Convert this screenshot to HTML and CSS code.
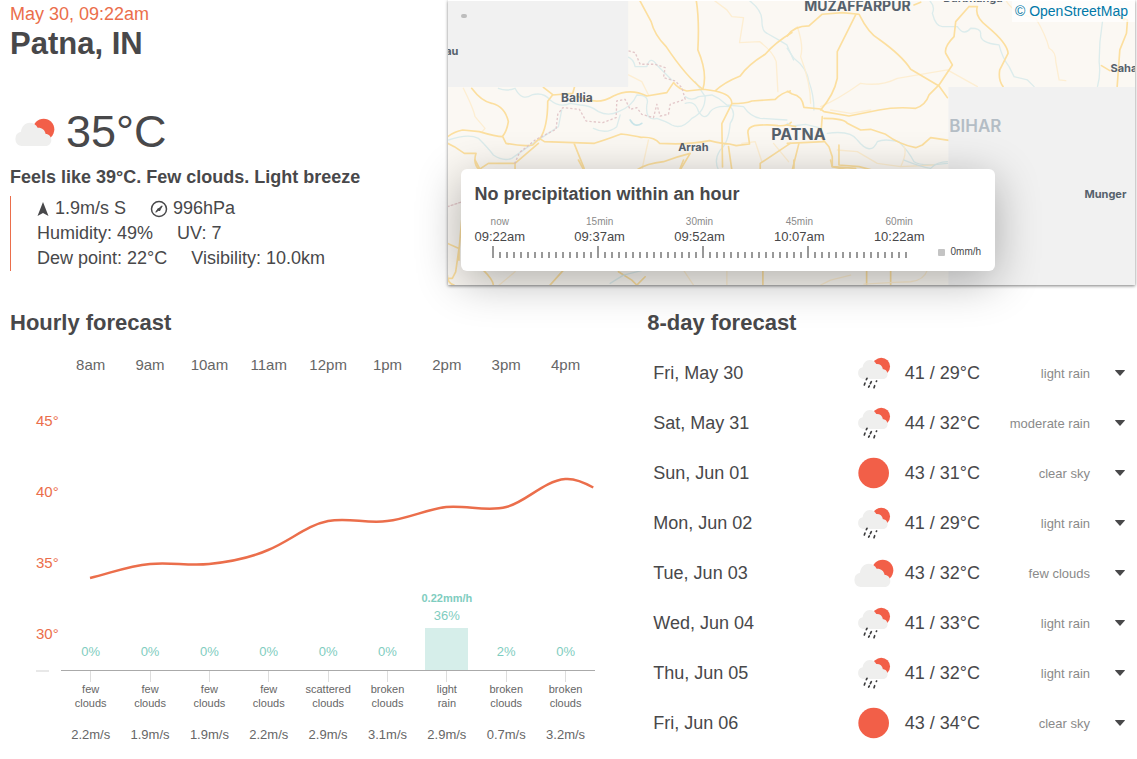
FILE: index.html
```html
<!DOCTYPE html>
<html lang="en">
<head>
<meta charset="utf-8">
<title>Weather in Patna, IN</title>
<meta name="viewport" content="width=device-width, initial-scale=1">
<link rel="stylesheet" href="styles.css">
</head>
<body>
<svg class="sprite" aria-hidden="true">
  <symbol id="cloud" viewBox="0 0 150 150">
    <circle cx="101" cy="67" r="32" fill="#f25f48"/>
    <path fill="#efefee" d="M34 117a22 22 0 0 1-1-43c1-14 12-27 26-27 11 0 20 6 24 15 12-1 22 6 24 19 10 0 17 8 17 18s-7 18-17 18z"/>
  </symbol>
  <symbol id="rain" viewBox="0 0 150 150">
    <g transform="translate(14 -1) scale(.82)">
      <circle cx="101" cy="69" r="32" fill="#f25f48"/>
      <path fill="#efefee" d="M34 115a22 22 0 0 1-1-43c1-14 12-27 26-27 11 0 20 6 24 15 12-1 22 6 24 19 10 0 17 8 17 18s-7 18-17 18z"/>
    </g>
    <path stroke="#3c3c3e" stroke-width="5" stroke-linecap="round" fill="none" d="M54 91l-2 4M48 105l-2 6M67 101l-3 6M61 114l-2 3M83 99l-1 1M77 113l-2 6"/>
  </symbol>
  <symbol id="sun" viewBox="0 0 150 150">
    <circle cx="74" cy="75" r="46" fill="#f25f48"/>
  </symbol>
  <symbol id="caret" viewBox="0 0 10 6">
    <path d="M.5 0h9q.8 0 .2.8L5.500 5.600q-.5.500-1 0L.3.8Q-.3 0 .5 0z" fill="#48484a"/>
  </symbol>
</svg>

<main class="page">
  <section class="top">
    <div class="current">
      <p class="date">May 30, 09:22am</p>
      <h1 class="city">Patna, IN</h1>
      <div class="temp">
        <svg class="icon"><use href="#cloud"/></svg>
        <span>35°C</span>
      </div>
      <p class="feels">Feels like 39°C. Few clouds. Light breeze</p>
      <ul class="facts">
        <li>
          <span><svg class="arrow" viewBox="0 0 12 14"><path d="M6 0l5.500 14-5.500-3-5.500 3z" fill="#48484a"/></svg>1.9m/s S</span>
          <span><svg class="gauge" viewBox="0 0 18 18"><circle cx="9" cy="9" r="7.500" fill="none" stroke="#48484a" stroke-width="1.500"/><path d="M13 5l-3 6-2 0zM5 13l3-5 2 1z" fill="#48484a"/><path d="M6 12l6-6" stroke="#48484a" stroke-width="1.500"/></svg>996hPa</span>
        </li>
        <li>
          <span><span class="key">Humidity:</span>49%</span>
          <span><span class="key">UV:</span>7</span>
        </li>
        <li>
          <span><span class="key">Dew point:</span>22°C</span>
          <span><span class="key">Visibility:</span>10.0km</span>
        </li>
      </ul>
    </div>

    <div class="map">
      <svg class="tiles" viewBox="448 1 687 284" preserveAspectRatio="xMidYMid slice" role="img" aria-label="Map around Patna">
        <rect x="448" y="0" width="688" height="286" fill="#fbf8f3"/>
        <g fill="none" stroke-linejoin="round" stroke-linecap="round">
          <g transform="translate(440 0) scale(.33333)">
            <g stroke="#dcecec" stroke-width="4">
              <path d="M925 0q40 30 40 60q0 35 15 40l35 20 25 15 20 45M175 265q25 10 50 0 20 40 50 20 35-10 55 15 30 25 60 10l30 5q30 0 55 20 30 15 60 0 40-15 55-50 40 0 30 30-5 50 30 40 30 10 45 20 30 15 60-20 40-20 40-65l-30-45M560 170q20 5 25 30l35 0q10-35 30-5l45 45M460 385q40 20 70-5l10-35M25 420q60-20 90-5 30 30 45 50 30 20 55 10l50-35 90-60 10-50M735 290q20 15 40 0l40-5 20 10 25 20 50 5q20 30 50 35l80 5M735 310q30-10 40 25 20 30 35 0 15-20 60-15 20 20 0 50-5 60-30 80-20 30-5 60"/>
            </g>
            <path d="M570 360q15 25 35 10" stroke="#c9e4e8" stroke-width="5"/>
            <g stroke="#fdeed2" stroke-width="4">
              <path d="M820 0l40 30 15 20 35 3-12 75 60-3q40 30 50 60l5 90M70 265q30 60 35 85l30 35-10 12M565 225l40 20 20 40M905 430l40-5 20 60M1000 430l45 55M625 420l-20 90"/>
            </g>
            <g stroke="#fcdf9f" stroke-width="5">
              <path d="M598 0l35 65q10 40 45 75 60 90 110 128M768 0q10 60 5 150 30 70 15 118M1055 98q-50 30-80 65-50 30-75 65-50 20-75 45l-35-5-50 5q-25-5-40-25l-20 30-60 10q-50-25-100 0-40 25-80 10-20-5-30-10M825 273q50 10 50 38 40 0 60-8l70-5q20-20 45-25M310 262l28 22-15 20q0 80-25 115M338 285l60-5 5-18M95 265q30 40 60 45 40 10 50 55-5 30-18 45M23 410q20-15 45-20l50 5q50 15 70 15l10 20q50 10 80 5l20-20 15 10 150 5q60-20 80-28 40 5 60 10 40-2 55 18 90 5 150-8 40 10 60 10l20 5 40-5-5-35q0-15 20-20 40-5 70 0 30 2 40-10M23 430l20 10 30 20 35 0q-10 30 10 50M295 430l-70 60-80 0-30 20M225 490l0 25M402 430l30 75M590 510q30-20 80-25 40-15 80-25l-30 50M875 311q-20 40-30 60l2 130M1050 430l-90 60 0 25M865 440l10 70"/>
            </g>
            <path d="M565 153l20 5 15 35 45 0 30 10-5 30 35 10 20 20 10 35-45 15-5 30-25 5-10-35-10 40-35-10-15-20-20 5-15-30-25 5-2 50-40 15-50-5-20-35-50-5-15 20-5 45-60 30-50 40-15 35" stroke="#e3c8ca" stroke-width="4" stroke-linecap="butt" stroke-dasharray="7 6"/>
          </g>
          <g transform="translate(787 0) scale(.33333)">
            <g stroke="#dcecec" stroke-width="4">
              <path d="M425 0q20 20 10 40 10 40 30 40l45 0q20 30 40 5 30 0 30 15-5 30 55 35 10 40 30 65l15 30 40 10 20 20M945 65q-10 60-10 120 5 40-5 75M0 145l20 30q40 30 45 70 15 40 15 85M120 400q70-10 90 20 40 50 60 5 20-10 65 0 30 30 45 60 20 15 100 5M0 370l15 8 40-5 40 10"/>
            </g>
            <g stroke="#fdeed2" stroke-width="4">
              <path d="M30 80q20 60 10 90 30 80 30 140M100 320q50-20 120-70 60 10 110-15l150-25 90 50M655 0q20 40 90 55 30 50 40 90 20 10 20 40l10 55 20 2M350 440q10 20-10 60M130 330l60 10 60-10M150 450l60 5 60 35 70 10 100-5"/>
            </g>
            <g stroke="#fcdf9f" stroke-width="5">
              <path d="M0 108q20-30 65-30l40-35 60-5 50 5q30 60 60 75 70 50 95 90l85 50 25 35M205 45l-25 50-30 60 0 80q-10 50-50 95M545 20l-40 45-5 45q-30 30-25 50l20 35-40 60-30 30q-10 30-40 40-60-5-110 5l-90 18-75-13-10-8-50-5q-5-35-35-40l-15-8M545 20l25 0q-10 30 30 60 60 50 62 80l-25 50q-5 30 10 50M110 355q60 0 70 15l40 20 30-2 45 15q40 30 90 40l20-8 25-22 55 8M1010 60l-25-15 35 15-3 40-20 50-8 110M942 197l25 15M105 350l-5 60 25 30 10 30 0 30 70 15M15 510l20-80M155 435l0 60 60 5 40 10M380 15l20-8M0 430l110-5M0 375l25 5"/>
            </g>
          </g>
          <g transform="translate(440 160) scale(.33333)" stroke="#fcdf9f" stroke-width="5">
            <path d="M22 250l35 15-10 70-10 20-15 0M65 180l-8 90 0 30M130 330q30 30 30 45M330 375l40-45M535 335l40 25 15 15 25-25M968 330v48M22 345q0 25 20 30M105 0l15 28M415 0l15 28M730 0l-10 25"/>
            <path d="M225 335l-50 42M730 330l30 45M860 330v48" stroke="#fdeed2" stroke-width="4"/>
            <path d="M510 370l40-25 60-15" stroke="#dcecec" stroke-width="4"/>
            <path d="M22 140l45-15" stroke="#e3c8ca" stroke-width="4" stroke-dasharray="6 6"/>
          </g>
          <g transform="translate(787 160) scale(.33333)" stroke="#fcdf9f" stroke-width="5">
            <path d="M238 330v48M310 330v48M20 0l0 25M130 0l5 20 70 5"/>
            <path d="M190 345l-60 15-30 15M420 330q-10 30-50 35l-50 2-90 5" stroke="#fdeed2" stroke-width="4"/>
            <path d="M350 0q50 20 80 25 20-20 50-20" stroke="#dcecec" stroke-width="4"/>
          </g>
        </g>
        <rect x="448" y="0" width="180" height="87" fill="#f1f1f1"/>
        <rect x="948" y="87" width="188" height="199" fill="#f1f1f1"/>
        <rect x="461" y="14" width="6" height="4" rx="2" fill="#bdbdbd"/>
        <g class="places">
          <text x="804" y="11" font-size="14">MUZAFFARPUR</text>
          <text x="943" y="2" font-size="11">Darbhanga</text>
          <text x="771" y="140" font-size="16">PATNA</text>
          <text x="561" y="102" font-size="12">Ballia</text>
          <text x="678" y="151" font-size="11">Arrah</text>
          <text x="1084" y="198" font-size="11">Munger</text>
          <text x="1110" y="72" font-size="11">Saharsa</text>
          <text x="435" y="55" font-size="11">Mau</text>
          <text x="949" y="132" font-size="17" class="region">BIHAR</text>
        </g>
      </svg>
      <a class="credit" href="#">© OpenStreetMap</a>
      <div class="rainfall">
        <h2 class="rainfall-title">No precipitation within an hour</h2>
        <div class="rainfall-body">
          <div class="timeline">
            <ol class="times">
              <li><small>now</small>09:22am</li>
              <li><small>15min</small>09:37am</li>
              <li><small>30min</small>09:52am</li>
              <li><small>45min</small>10:07am</li>
              <li><small>60min</small>10:22am</li>
            </ol>
            <svg class="ticks" viewBox="0 0 415 12" aria-hidden="true"><path d="M0 9h415" stroke="#999" stroke-width="6" stroke-dasharray="2 5"/><path d="M0 6h415" stroke="#999" stroke-width="12" stroke-dasharray="2 103"/></svg>
          </div>
          <span class="legend">0mm/h</span>
        </div>
      </div>
    </div>
  </section>

  <section class="forecasts">
    <div class="hourly">
      <h2 class="heading">Hourly forecast</h2>
      <div class="chart">
        <ol class="columns hours">
          <li>8am</li><li>9am</li><li>10am</li><li>11am</li><li>12pm</li><li>1pm</li><li>2pm</li><li>3pm</li><li>4pm</li>
        </ol>
        <div class="scale"><span>45°</span><span>40°</span><span>35°</span><span>30°</span></div>
        <svg class="curve" viewBox="61 375 534 295" preserveAspectRatio="none" aria-hidden="true">
          <path d="M90 578C111 573 128 566 150 564C170 562 188 566 209 564C229 562 250 558 268 550C290 541 307 525 328 521C348 517 367 524 387 521C407 519 427 509 446 507C466 505 487 512 506 507C526 502 543 481 565 479C575 478 585 483 593 487.500" fill="none" stroke="#eb6e4b" stroke-width="2.500"/>
        </svg>
        <ol class="columns chance">
          <li>0%</li><li>0%</li><li>0%</li><li>0%</li><li>0%</li><li>0%</li>
          <li><b>0.22mm/h</b>36%<i class="bar" style="height:42px"></i></li>
          <li>2%</li><li>0%</li>
        </ol>
        <ol class="columns sky">
          <li>few clouds</li><li>few clouds</li><li>few clouds</li><li>few clouds</li><li>scattered clouds</li><li>broken clouds</li><li>light<br>rain</li><li>broken clouds</li><li>broken clouds</li>
        </ol>
        <ol class="columns wind">
          <li>2.2m/s</li><li>1.9m/s</li><li>1.9m/s</li><li>2.2m/s</li><li>2.9m/s</li><li>3.1m/s</li><li>2.9m/s</li><li>0.7m/s</li><li>3.2m/s</li>
        </ol>
      </div>
    </div>

    <div class="daily">
      <h2 class="heading">8-day forecast</h2>
      <ul class="days">
        <li><span class="day">Fri, May 30</span><svg class="icon"><use href="#rain"/></svg><span class="range">41 / 29°C</span><span class="desc">light rain</span><button class="more" aria-label="More about Fri, May 30"><svg class="caret"><use href="#caret"/></svg></button></li>
        <li><span class="day">Sat, May 31</span><svg class="icon"><use href="#rain"/></svg><span class="range">44 / 32°C</span><span class="desc">moderate rain</span><button class="more" aria-label="More about Sat, May 31"><svg class="caret"><use href="#caret"/></svg></button></li>
        <li><span class="day">Sun, Jun 01</span><svg class="icon"><use href="#sun"/></svg><span class="range">43 / 31°C</span><span class="desc">clear sky</span><button class="more" aria-label="More about Sun, Jun 01"><svg class="caret"><use href="#caret"/></svg></button></li>
        <li><span class="day">Mon, Jun 02</span><svg class="icon"><use href="#rain"/></svg><span class="range">41 / 29°C</span><span class="desc">light rain</span><button class="more" aria-label="More about Mon, Jun 02"><svg class="caret"><use href="#caret"/></svg></button></li>
        <li><span class="day">Tue, Jun 03</span><svg class="icon"><use href="#cloud"/></svg><span class="range">43 / 32°C</span><span class="desc">few clouds</span><button class="more" aria-label="More about Tue, Jun 03"><svg class="caret"><use href="#caret"/></svg></button></li>
        <li><span class="day">Wed, Jun 04</span><svg class="icon"><use href="#rain"/></svg><span class="range">41 / 33°C</span><span class="desc">light rain</span><button class="more" aria-label="More about Wed, Jun 04"><svg class="caret"><use href="#caret"/></svg></button></li>
        <li><span class="day">Thu, Jun 05</span><svg class="icon"><use href="#rain"/></svg><span class="range">41 / 32°C</span><span class="desc">light rain</span><button class="more" aria-label="More about Thu, Jun 05"><svg class="caret"><use href="#caret"/></svg></button></li>
        <li><span class="day">Fri, Jun 06</span><svg class="icon"><use href="#sun"/></svg><span class="range">43 / 34°C</span><span class="desc">clear sky</span><button class="more" aria-label="More about Fri, Jun 06"><svg class="caret"><use href="#caret"/></svg></button></li>
      </ul>
    </div>
  </section>
</main>
</body>
</html>
```
FILE: styles.css
```css
* {
  box-sizing: border-box;
}

body {
  margin: 0;
  background: #fff;
  color: #48484a;
  font: 18px/25px "Liberation Sans", Arial, sans-serif;
}

h1, h2, p, ul, ol {
  margin: 0;
  padding: 0;
  list-style: none;
}

svg {
  display: block;
}

.sprite {
  display: none;
}

.page {
  padding: 0 2px 0 10px;
}

.icon {
  flex: none;
  width: 50px;
  height: 50px;
}

/* Current conditions and map */
.top {
  display: grid;
  grid-template-columns: 7fr 11fr;
}

.current {
  padding-top: 2px;
}

.date {
  color: #eb6e4b;
  line-height: 24px;
}

.city {
  font-size: 31px;
  line-height: 36px;
}

.temp {
  display: flex;
  align-items: center;
  gap: 6px;
  margin-top: 45px;
  font-size: 45px;
  line-height: 50px;
}

.feels {
  margin-top: 8px;
  line-height: 24px;
  font-weight: bold;
}

.facts {
  margin-top: 7px;
  padding-left: 26px;
  border-left: 1px solid #eb6e4b;
}

.facts li {
  display: flex;
  gap: 24px;
}

.facts li > span {
  display: flex;
  align-items: center;
}

.key {
  margin-right: 5px;
}

.arrow {
  width: 12px;
  height: 14px;
  margin-right: 6px;
}

.gauge {
  width: 18px;
  height: 18px;
  margin-right: 5px;
}

.map {
  position: relative;
  height: 285px;
  padding-top: 1px;
  box-shadow: 0 1px 3px rgba(0, 0, 0, 0.5);
}

.tiles {
  width: 100%;
  height: 100%;
}

.places {
  fill: #56616c;
  font-family: Inter, "Open Sans", sans-serif;
  font-weight: 700;
}

.places .region {
  fill: #b4bdc5;
  font-weight: 600;
}

.credit {
  position: absolute;
  top: 1px;
  right: 0;
  padding: 0 7px 0 3px;
  background: rgba(255, 255, 255, 0.7);
  color: #0078a8;
  font-size: 14px;
  line-height: 21px;
  text-decoration: none;
}

.rainfall {
  position: absolute;
  left: 13px;
  bottom: 14px;
  padding: 14px 14px 12px;
  border-radius: 6px;
  background: #fff;
  box-shadow: 0 10px 45px rgba(0, 0, 0, 0.3);
}

.rainfall-title {
  font-size: 18px;
  line-height: 22px;
}

.rainfall-body {
  display: flex;
  align-items: flex-end;
  gap: 13px;
  margin-top: 10px;
}

.timeline {
  width: 450px;
}

.times {
  display: flex;
  justify-content: space-between;
  font-size: 13px;
  line-height: 16px;
  text-align: center;
}

.times small {
  display: block;
  color: #8a8a8a;
  font-size: 10px;
  line-height: 14px;
}

.ticks {
  width: 415px;
  height: 12px;
  margin: 1px 0 1px 17px;
}

.legend {
  display: flex;
  align-items: center;
  gap: 6px;
  font-size: 10px;
  line-height: 14px;
}

.legend::before {
  content: "";
  width: 7px;
  height: 7px;
  border-radius: 1px;
  background: #c4c4c4;
}

/* Forecasts */
.forecasts {
  display: grid;
  grid-template-columns: 6fr 5fr;
  column-gap: 52px;
  margin-top: 23px;
}

.heading {
  font-size: 22px;
  line-height: 30px;
}

.chart {
  display: grid;
  grid-template-columns: 51px 1fr;
  grid-template-rows: auto 296px auto auto;
  margin-top: 17px;
  color: #666;
}

.columns {
  grid-column: 2;
  display: grid;
  grid-template-columns: repeat(9, 1fr);
  text-align: center;
}

.hours {
  font-size: 15px;
  line-height: 20px;
}

.scale {
  grid-area: 2 / 1;
  display: flex;
  flex-direction: column;
  gap: 51px;
  padding: 36px 0 0 26px;
  color: #eb6e4b;
  font-size: 15px;
  line-height: 20px;
}

.scale::after {
  content: "";
  width: 13px;
  margin-top: -25px;
  border-top: 2px solid #e8e8e8;
}

.curve {
  grid-area: 2 / 2;
  width: 100%;
  height: 295px;
}

.chance {
  grid-area: 2 / 2;
  align-items: end;
  border-bottom: 1px solid #aaa;
  color: #7fcdc0;
  font-size: 13px;
  line-height: 18px;
}

.chance li {
  padding-bottom: 9px;
}

.chance li:has(.bar) {
  padding-bottom: 0;
}

.chance b {
  display: block;
  font-size: 11px;
}

.bar {
  display: block;
  width: 43px;
  margin: 3px auto 0;
  background: #d6eeea;
}

.sky {
  font-size: 11px;
  line-height: 14px;
}

.sky li {
  padding: 0 6px;
}

.sky li::before {
  content: "";
  display: block;
  width: 1px;
  height: 11px;
  margin: 0 auto;
  background: #ddd;
}

.wind {
  margin-top: 15px;
  font-size: 13px;
  line-height: 20px;
}

.days {
  margin-top: 10px;
}

.days li {
  display: flex;
  align-items: center;
  height: 50px;
  padding: 0 5px 0 6px;
}

.day {
  flex: 1;
}

.range {
  margin-left: 6px;
}

.desc {
  width: 110px;
  color: #8a8a8a;
  font-size: 13px;
  text-align: right;
}

.more {
  margin-left: 20px;
  padding: 6px 5px;
  border: 0;
  background: none;
  cursor: pointer;
}

.caret {
  width: 10px;
  height: 6px;
}
```
